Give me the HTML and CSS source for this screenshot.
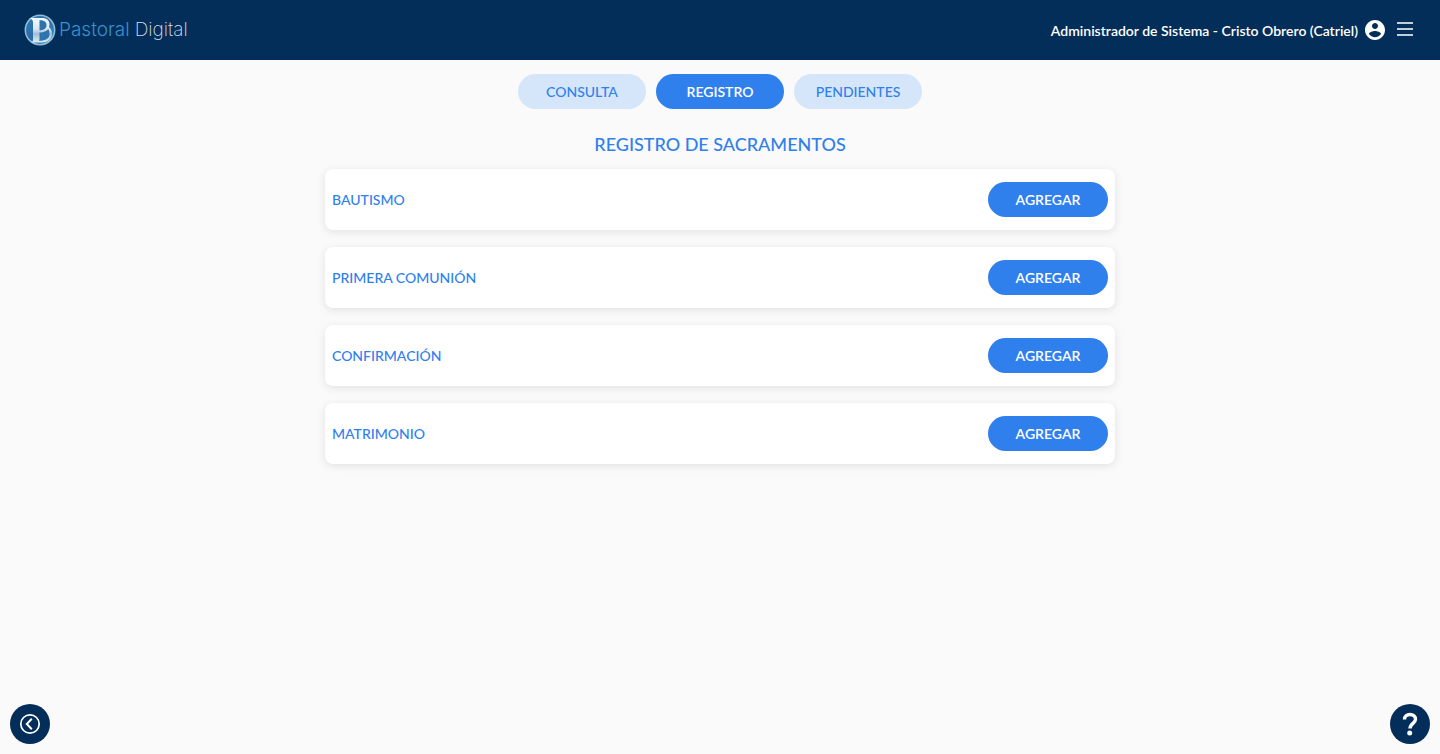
FILE: index.html
```html
<!DOCTYPE html>
<html lang="es">
<head>
<meta charset="utf-8">
<meta name="viewport" content="width=device-width, initial-scale=1">
<title>Pastoral Digital</title>
<link rel="stylesheet" href="styles.css">
</head>
<body>
<header class="topbar">
  <a class="brand" href="#">
    <svg class="brand-mark" viewBox="0 0 32 32" aria-hidden="true">
      <defs>
        <linearGradient id="disc" x1="0" y1="0" x2="1" y2="1">
          <stop offset="0" stop-color="#2d7fb8"/><stop offset=".5" stop-color="#2a6ba5"/><stop offset="1" stop-color="#4a9bd0"/>
        </linearGradient>
        <linearGradient id="silver" x1="0" y1="0" x2="0" y2="1">
          <stop offset="0" stop-color="#f4f8fb"/><stop offset=".45" stop-color="#dbe7f1"/><stop offset=".65" stop-color="#9fbdd6"/><stop offset="1" stop-color="#e3edf5"/>
        </linearGradient>
      </defs>
      <circle cx="16" cy="16" r="14.7" fill="url(#disc)" stroke="#93bcd9" stroke-width="1.500"/>
      <path d="M5 4H18C23 4 25.500 6.500 25.500 10.500C25.500 11.500 25.300 12.300 25 13C27 15 28 17.500 28 20C28 25.500 23.500 28.500 17 28.500H7C8.500 28 9 27 9 25.500V8.500C9 6 8 5 5 4Z" fill="url(#silver)"/>
      <path d="M15.500 6.300C20.500 6.300 22.500 8 22.500 11C22.500 14.500 20 16.200 15.500 16.500ZM15.500 18.500C20.500 18.200 23 16.700 24.200 14.900C25.100 16.300 25.500 18 25.500 20C25.500 24.500 22 26.600 15 26.800C15.400 26 15.500 25.500 15.500 24.500Z" fill="#2d73ad"/>
    </svg>
    <span class="brand-name"><span class="brand-first">Pastoral</span><span class="brand-second">Digital</span></span>
  </a>
  <div class="account">
    <span class="account-name">Administrador de Sistema - Cristo Obrero (Catriel)</span>
    <button class="icon-button" aria-label="Cuenta">
      <svg class="user-icon" viewBox="2 2 20 20" aria-hidden="true"><path fill="#fff" d="M12 2C6.480 2 2 6.480 2 12s4.480 10 10 10 10-4.480 10-10S17.520 2 12 2zm0 3c1.660 0 3 1.340 3 3s-1.340 3-3 3-3-1.340-3-3 1.340-3 3-3zm0 14.200c-2.500 0-4.710-1.280-6-3.220.03-1.990 4-3.080 6-3.080 1.990 0 5.970 1.090 6 3.080-1.290 1.940-3.500 3.220-6 3.220z"/></svg>
    </button>
    <button class="icon-button menu-button" aria-label="Menú">
      <svg class="menu-icon" viewBox="0 0 16 14" aria-hidden="true"><path d="M0 1H16M0 7H16M0 13H16" stroke="#c3ced9" stroke-width="2"/></svg>
    </button>
  </div>
</header>
<main class="content">
  <nav class="tabs" aria-label="Secciones">
    <button class="pill tab">CONSULTA</button>
    <button class="pill tab tab-active" aria-current="page">REGISTRO</button>
    <button class="pill tab">PENDIENTES</button>
  </nav>
  <h1 class="title">REGISTRO DE SACRAMENTOS</h1>
  <ul class="cards">
    <li class="card"><span class="card-name">BAUTISMO</span><button class="pill add">AGREGAR</button></li>
    <li class="card"><span class="card-name">PRIMERA COMUNIÓN</span><button class="pill add">AGREGAR</button></li>
    <li class="card"><span class="card-name">CONFIRMACIÓN</span><button class="pill add">AGREGAR</button></li>
    <li class="card"><span class="card-name">MATRIMONIO</span><button class="pill add">AGREGAR</button></li>
  </ul>
</main>
<footer class="bottom">
  <button class="round" aria-label="Volver">
    <svg class="round-icon" viewBox="0 0 40 40" aria-hidden="true"><circle cx="20" cy="20" r="9.200" fill="none" stroke="#fff" stroke-width="1.700"/><path d="M21.800 14.800L16.800 20L21.800 25.200" fill="none" stroke="#fff" stroke-width="2"/></svg>
  </button>
  <button class="round" aria-label="Ayuda">
    <svg class="round-icon" viewBox="0 0 40 40" aria-hidden="true"><path d="M14.500 15.500C14.500 12.200 16.800 10.500 20 10.500C23.200 10.500 25.500 12.300 25.500 15.300C25.500 19.300 20 19.500 20 24.500" fill="none" stroke="#fff" stroke-width="3.400"/><circle cx="19.700" cy="29" r="2.500" fill="#fff"/></svg>
  </button>
</footer>
</body>
</html>
```
FILE: styles.css
```css
* { box-sizing: border-box; }
body {
  margin: 0;
  min-height: 100vh;
  display: flex;
  flex-direction: column;
  background: #fafafa;
  color: #2f80ed;
  font-family: Lato, "Liberation Sans", sans-serif;
  font-size: 14px;
  line-height: 20px;
}
button { font: inherit; border: 0; padding: 0; cursor: pointer; }
.topbar {
  height: 60px;
  padding: 0 27px 0 24px;
  display: flex;
  align-items: center;
  justify-content: space-between;
  background: #032e59;
}
.brand { display: flex; align-items: center; gap: 3px; padding-bottom: 1px; text-decoration: none; }
.brand-mark { width: 32px; height: 32px; }
.brand-name { display: flex; gap: 5px; font-family: Inter, "Liberation Sans", sans-serif; font-size: 19px; }
.brand-first { font-weight: 300; color: #3592cb; }
.brand-second { font-weight: 200; color: #d5dce3; }
.account { display: flex; align-items: center; color: #fff; }
.account-name { font-weight: 600; margin-right: 7px; padding-top: 2px; }
.icon-button { background: none; display: flex; }
.user-icon { width: 20px; height: 20px; }
.menu-button { margin-left: 12px; padding-bottom: 2px; }
.menu-icon { width: 16px; height: 14px; }
.content {
  flex: 1;
  width: 100%;
  max-width: 790px;
  margin: 0 auto;
  padding-top: 14px;
}
.tabs { display: flex; justify-content: center; gap: 10px; }
.pill { height: 35px; border-radius: 18px; background: #2f80ed; color: #fff; font-weight: 600; }
.tab { width: 128px; }
.tab:not(.tab-active) { background: #d5e6fb; color: #2f80ed; font-weight: 500; }
.title { margin: 23px 0 13px; font-size: 18px; line-height: 24px; font-weight: 500; text-align: center; }
.cards { margin: 0; padding: 0; list-style: none; display: grid; gap: 17px; }
.card {
  padding: 13px 7px;
  display: flex;
  align-items: center;
  justify-content: space-between;
  background: #fff;
  border-radius: 8px;
  box-shadow: 0 2px 8px rgba(0, 0, 0, 0.1);
}
.card-name { font-weight: 500; }
.add { width: 120px; }
.bottom { display: flex; justify-content: space-between; padding: 10px; }
.round { width: 40px; height: 40px; border-radius: 50%; background: #032e59; }
.round-icon { display: block; width: 40px; height: 40px; }
```
